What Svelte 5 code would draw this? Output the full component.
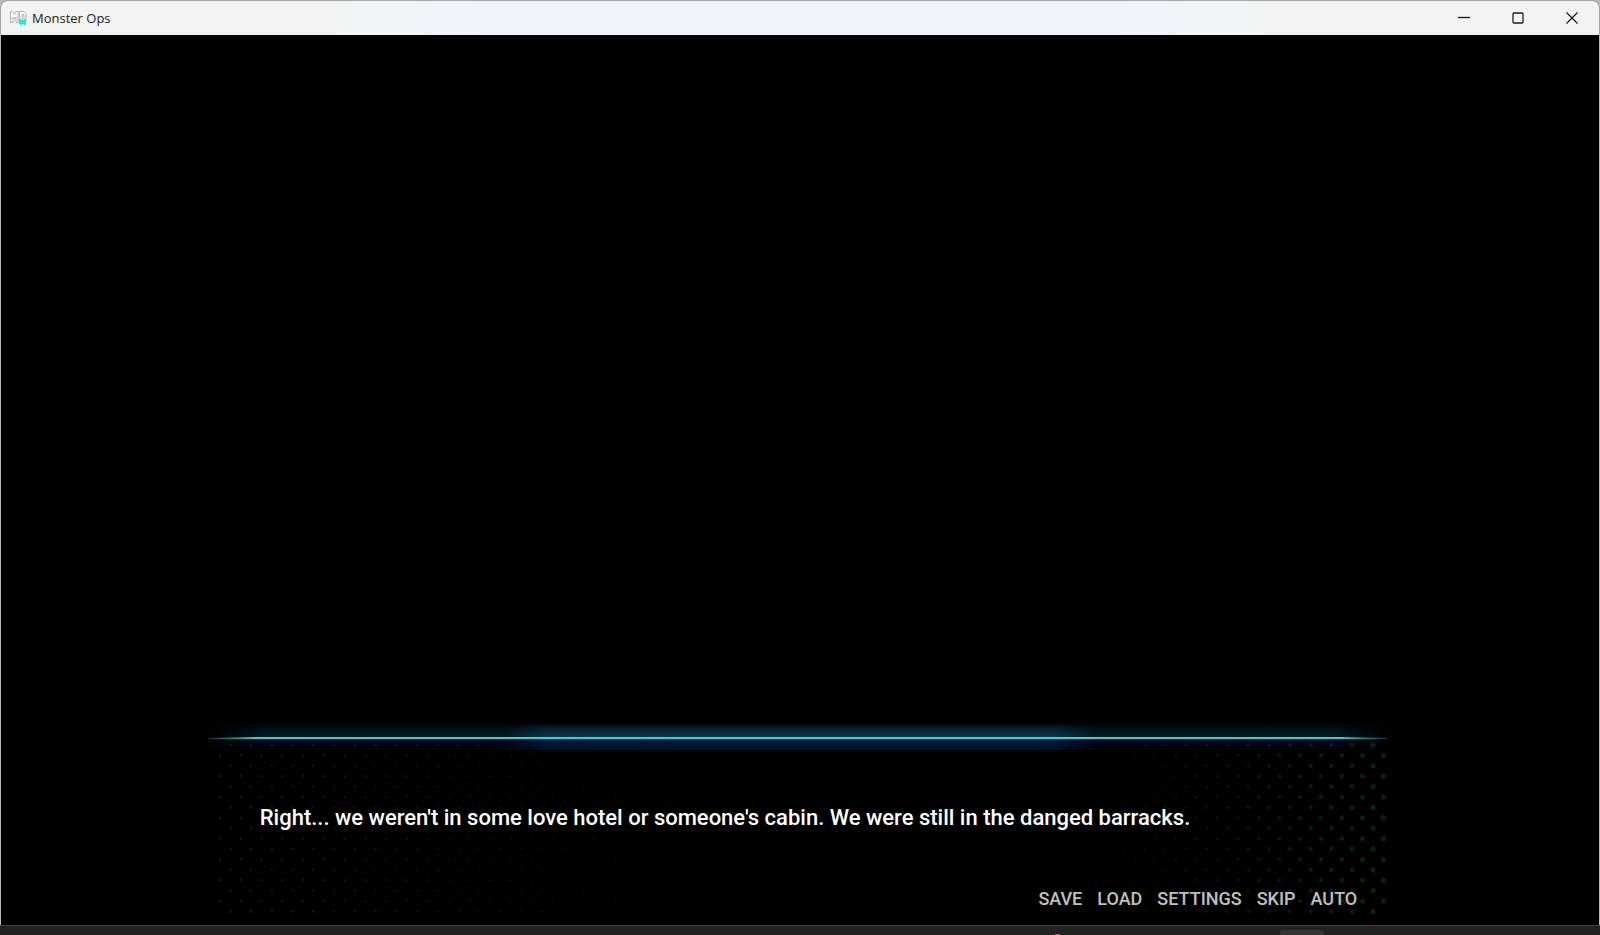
<!--
  Visual novel window
  Title bar, black scene and the dialogue panel with its quick menu
-->
<script lang="ts">
  interface Dot {
    x: number;
    y: number;
    r: number;
    opacity: number;
    side: 'left' | 'right';
  }

  const title = 'Monster Ops';
  const line =
    "Right... we weren't in some love hotel or someone's cabin. We were still in the danged barracks.";
  const menu = ['Save', 'Load', 'Settings', 'Skip', 'Auto'];

  const STEP = 20.8;
  const ROWS = 17;
  const COLS = 57;

  // halftone: small and faint on the left, growing toward the right edge
  function makeDots(): Dot[] {
    const dots: Dot[] = [];
    for (let row = 0; row < ROWS; row++) {
      for (let col = 0; col < COLS; col++) {
        const x = 11 + col * STEP + (row % 2 === 0 ? STEP / 2 : 0);
        const y = 7 + (row * STEP) / 2;
        if (x > 1178) continue;
        if (x < 500) {
          dots.push({ x, y, r: 1.3, opacity: 0.9 - x / 560, side: 'left' });
        } else if (x > 890) {
          const t = (x - 890) / 288;
          dots.push({ x, y, r: 1 + t * 1.7, opacity: 0.2 + t * 0.7, side: 'right' });
        }
      }
    }
    return dots;
  }

  const dots = makeDots();
</script>

<div class="window">
  <header class="titlebar">
    <svg class="titlebar__icon" viewBox="0 0 17 16" aria-hidden="true">
      <path d="M.5 12.500V1.500h2l2 3 1.500-3h2v11H6V7L4.500 9 3 7v5.500z" fill="#fff" stroke="#b0b0b0" />
      <path d="M9.500 11.500v-10H14l2 2v8h-2v-7h-2v7z" fill="#fff" stroke="#b0b0b0" />
      <path d="M9 9h2v1h3V9h2v6h-2v-1h-2v1h-2v-1H9z" fill="#18ecec" />
    </svg>
    <h1 class="titlebar__title">{title}</h1>
    <div class="titlebar__controls">
      <button type="button" aria-label="Minimize">
        <svg viewBox="0 0 12 12"><path d="M0 5.500h12" /></svg>
      </button>
      <button type="button" aria-label="Maximize">
        <svg viewBox="0 0 12 12"><rect x="1" y="1" width="10" height="10" rx="1" /></svg>
      </button>
      <button type="button" aria-label="Close">
        <svg viewBox="0 0 12 12"><path d="M.5.5l11 11M11.500.5l-11 11" /></svg>
      </button>
    </div>
  </header>

  <main class="scene">
    <section class="dialogue">
      <div class="dialogue__glow"></div>
      <div class="dialogue__glow dialogue__glow--core"></div>
      <svg class="dialogue__dots" viewBox="0 0 1184 187" preserveAspectRatio="none" aria-hidden="true">
        {#each dots as dot}
          <circle
            class="dot dot--{dot.side}"
            cx={dot.x}
            cy={dot.y}
            r={dot.r}
            opacity={dot.opacity}
          />
        {/each}
      </svg>
      <div class="dialogue__rule"></div>

      <p class="dialogue__text">{line}</p>

      <nav class="menu">
        {#each menu as item}
          <button type="button" class="menu__item">{item}</button>
        {/each}
      </nav>
    </section>
  </main>

  <footer class="taskbar">
    <span class="taskbar__badge"></span>
    <span class="taskbar__tab"></span>
  </footer>
</div>

<style>
  :global(body) {
    background: #b9b9b9;
  }

  .window {
    display: flex;
    flex-direction: column;
    min-height: 100vh;
    font-family: 'Open Sans', 'Noto Sans', sans-serif;
  }

  .titlebar {
    display: flex;
    align-items: center;
    box-sizing: border-box;
    height: 35px;
    padding-left: 9px;
    border: 1px solid #a6a6a6;
    border-bottom: 0;
    border-radius: 8px 8px 0 0;
    background: linear-gradient(90deg, #f3f3f3 20%, #f0f4f9 30%, #f0f4f9 70%, #f3f3f3 80%);
  }

  .titlebar__icon {
    width: 17px;
    height: 16px;
  }

  .titlebar__title {
    flex: 1;
    margin: 0 0 0 5px;
    font-size: 13px;
    font-weight: 400;
    line-height: 20px;
    color: #1a1a1a;
  }

  .titlebar__controls {
    display: flex;
    align-self: stretch;
  }

  .titlebar__controls button {
    display: flex;
    align-items: center;
    justify-content: center;
    width: 54px;
    padding: 0;
    border: 0;
    background: none;
  }

  .titlebar__controls svg {
    width: 12px;
    height: 12px;
    fill: none;
    stroke: #1c1c1c;
    stroke-width: 1.3;
  }

  .scene {
    display: flex;
    flex: 1;
    flex-direction: column;
    justify-content: flex-end;
    align-items: center;
    margin: 0 1px;
    background: #000;
  }

  .dialogue {
    position: relative;
    display: flex;
    flex-direction: column;
    box-sizing: border-box;
    width: 74%;
    padding: 64px 34px 12px 51px;
  }

  .dialogue__rule {
    position: absolute;
    top: -1px;
    left: 0;
    right: 4px;
    height: 2px;
    background: linear-gradient(90deg, #0a3c42, #41cbd0 4%, #41cbd0 96%, #0a3c42);
    clip-path: polygon(0 50%, 4% 0, 96% 0, 100% 50%, 100% 100%, 96% 100%, 4% 100%, 0 100%);
  }

  .dialogue__glow {
    position: absolute;
    top: -16px;
    left: 0;
    right: 0;
    height: 28px;
    background: linear-gradient(#000, #03131a 30%, #051c22 57%, #00061f 57%, #00041a 80%, #000);
    mask-image: linear-gradient(90deg, transparent, #000 5%, #000 95%, transparent);
  }

  .dialogue__glow--core {
    left: 25%;
    right: 25%;
    height: 32px;
    background: linear-gradient(#000, #061f2a 20%, #063c50 50%, #001c42 50%, #001538 70%, #000);
    mask-image: linear-gradient(90deg, transparent, #000 7%, #000 93%, transparent);
  }

  .dialogue__dots {
    position: absolute;
    inset: 0;
    width: 100%;
    height: 100%;
  }

  .dot--left {
    fill: #13201e;
  }

  .dot--right {
    fill: #05261f;
  }

  .dialogue__text {
    position: relative;
    margin: 0;
    font-family: Roboto, sans-serif;
    font-size: 22px;
    font-weight: 500;
    line-height: 32px;
    color: #fff;
  }

  .menu {
    position: relative;
    display: flex;
    justify-content: flex-end;
    gap: 15px;
    margin-top: 51px;
  }

  .menu__item {
    padding: 0;
    border: 0;
    background: none;
    font-family: Roboto, sans-serif;
    font-size: 18px;
    font-weight: 500;
    line-height: 28px;
    text-transform: uppercase;
    color: #c0c0c0;
    cursor: pointer;
  }

  .menu__item:hover {
    color: #fff;
  }

  .taskbar {
    display: flex;
    align-items: flex-end;
    justify-content: flex-end;
    gap: 220px;
    box-sizing: border-box;
    height: 10px;
    padding-right: 276px;
    border-top: 1px solid #444;
    background: #212121;
  }

  .taskbar__badge {
    width: 5px;
    height: 1px;
    border-radius: 4px 4px 0 0;
    background: #d85050;
  }

  .taskbar__tab {
    width: 44px;
    height: 5px;
    border-radius: 4px 4px 0 0;
    background: #343434;
  }
</style>
